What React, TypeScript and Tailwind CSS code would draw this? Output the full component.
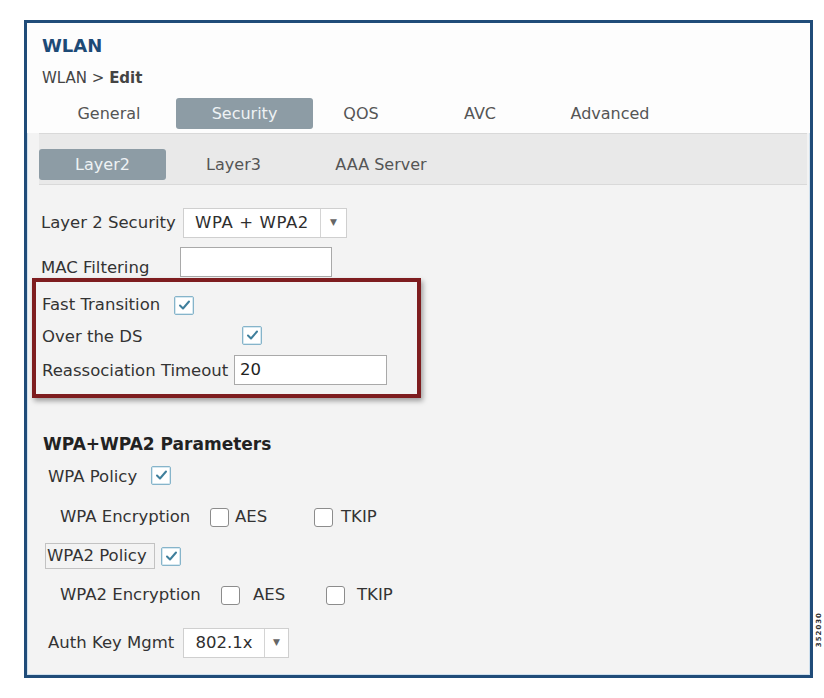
import React from "react";

const FONT = "font-['DejaVu_Sans','Liberation_Sans',sans-serif]";

function Check({ checked }: { checked?: boolean }) {
  if (checked) {
    return (
      <span className="flex h-[19px] w-[20px] shrink-0 items-center justify-center rounded-[2px] border border-[#86b4ca] bg-white shadow-[inset_0_0_0_1px_#d6e8f0]">
        <svg width="13" height="12" viewBox="0 0 13 12" fill="none">
          <path d="M2 6.5 L5 9.5 L11 2.5" stroke="#3f7f9c" strokeWidth="2" strokeLinecap="round" strokeLinejoin="round" />
        </svg>
      </span>
    );
  }
  return <span className="h-[19px] w-[19px] shrink-0 rounded-[3px] border border-[#8c8c8c] bg-white" />;
}

function Select({ value, w, split, extra }: { value: string; w: string; split: string; extra?: string }) {
  return (
    <div className={`flex h-[30px] ${w} items-stretch border border-[#cfcfcf] bg-white`}>
      <div className={`flex ${split} items-center justify-center text-[16.5px] text-[#2e2e2e] ${extra ?? ""}`}>{value}</div>
      <div className="flex flex-1 items-center justify-center border-l border-[#d4d4d4] text-[9px] text-[#666]">▼</div>
    </div>
  );
}

function Tab({ label, active, w }: { label: string; active?: boolean; w: string }) {
  if (active) {
    return (
      <div className={`flex h-[31px] ${w} items-center justify-center rounded-[3px] bg-[#8d9ca5] text-[16px] text-[#eef2f4]`}>
        {label}
      </div>
    );
  }
  return <div className={`flex h-[31px] ${w} items-center justify-center text-[16px] text-[#555]`}>{label}</div>;
}

export default function App() {
  return (
    <div className={`relative h-[698px] w-[824px] overflow-hidden bg-white pt-[20px] pl-[24px] ${FONT}`}>
      <div className="flex h-[658px] w-[789px] flex-col border-[3px] border-[#204c79] bg-[#f3f3f3] shadow-[inset_0_0_0_1px_#cfe0ee]">
        {/* header */}
        <div className="bg-[#fdfdfd] pl-[15px] pt-[11px]">
          <div className="flex h-[22px] items-center text-[18px] font-bold text-[#1d4a76]">WLAN</div>
          <div className="mt-[13px] flex h-[18px] items-center text-[15px] text-[#444]">
            WLAN &gt;&nbsp;<span className="font-bold">Edit</span>
          </div>
          <div className="mt-[11px] flex h-[35px] items-start">
            <Tab label="General" w="w-[134px]" />
            <Tab label="Security" active w="w-[137px]" />
            <Tab label="QOS" w="w-[96px]" />
            <Tab label="AVC" w="w-[142px]" />
            <Tab label="Advanced" w="w-[118px]" />
          </div>
        </div>
        <div className="ml-[12px] mr-[3px] h-[52px] border-y border-[#d9d9d9] bg-[#e9e9e9] pt-[15px]">
          <div className="flex items-start">
            <Tab label="Layer2" active w="w-[127px]" />
            <Tab label="Layer3" w="w-[135px]" />
            <Tab label="AAA Server" w="w-[160px]" />
          </div>
        </div>

        {/* content */}
        <div className="flex flex-col pl-[14px] pt-[23px] text-[16.5px] text-[#333]">
          <div className="flex h-[30px] items-center">
            <span className="w-[142px] shrink-0 whitespace-nowrap">Layer 2 Security</span>
            <Select value="WPA + WPA2" w="w-[164px]" split="w-[136px]" extra="tracking-[0.6px]" />
          </div>
          <div className="mt-[9px] flex h-[30px] items-end">
            <span className="w-[139px] shrink-0 whitespace-nowrap leading-[18px]">MAC Filtering</span>
            <div className="h-[30px] w-[152px] border border-[#a9a9a9] bg-white" />
          </div>

          <div className="-ml-[9px] mt-[1px] w-[389px] border-[4px] border-[#7e1d1f] pl-[6px] pt-[13px] pb-[9px] shadow-[2px_3px_5px_rgba(0,0,0,0.35)]">
            <div className="flex h-[20px] items-center">
              <span className="w-[132px] shrink-0 whitespace-nowrap">Fast Transition</span>
              <Check checked />
            </div>
            <div className="mt-[10px] flex h-[20px] items-center">
              <span className="w-[200px] shrink-0 whitespace-nowrap pt-[5px]">Over the DS</span>
              <Check checked />
            </div>
            <div className="mt-[10px] flex h-[30px] items-center">
              <span className="w-[192px] shrink-0 whitespace-nowrap pt-[3px]">Reassociation Timeout</span>
              <div className="flex h-[30px] w-[153px] items-center border border-[#a9a9a9] bg-white pl-[5px] text-[#222]">20</div>
            </div>
          </div>

          <div className="mt-[37px] flex h-[20px] items-center pl-[2px] text-[17px] font-bold text-[#222]">WPA+WPA2 Parameters</div>
          <div className="mt-[10px] flex h-[20px] items-center pl-[7px]">
            <span className="w-[103px] shrink-0 whitespace-nowrap pt-[4px]">WPA Policy</span>
            <Check checked />
          </div>
          <div className="mt-[22px] flex h-[20px] items-center pl-[19px]">
            <span className="w-[150px] shrink-0 whitespace-nowrap">WPA Encryption</span>
            <Check />
            <span className="ml-[6px] w-[79px] shrink-0">AES</span>
            <Check />
            <span className="ml-[8px]">TKIP</span>
          </div>
          <div className="mt-[16px] flex h-[26px] items-center pl-[4px]">
            <span className="flex h-[26px] w-[110px] shrink-0 items-center whitespace-nowrap border border-[#c2c2c2] pl-[1px]">WPA2 Policy</span>
            <span className="ml-[6px]">
              <Check checked />
            </span>
          </div>
          <div className="mt-[16px] flex h-[20px] items-center pl-[19px]">
            <span className="w-[161px] shrink-0 whitespace-nowrap">WPA2 Encryption</span>
            <Check />
            <span className="ml-[13px] w-[73px] shrink-0">AES</span>
            <Check />
            <span className="ml-[12px]">TKIP</span>
          </div>
          <div className="mt-[23px] flex h-[30px] items-center pl-[7px]">
            <span className="w-[135px] shrink-0 whitespace-nowrap">Auth Key Mgmt</span>
            <Select value="802.1x" w="w-[106px]" split="w-[80px]" />
          </div>
        </div>
      </div>
      <div className="absolute left-[815px] top-[612px] text-[7px] leading-[8px] font-bold tracking-[1px] text-[#333] [writing-mode:vertical-rl] rotate-180">
        352030
      </div>
    </div>
  );
}
